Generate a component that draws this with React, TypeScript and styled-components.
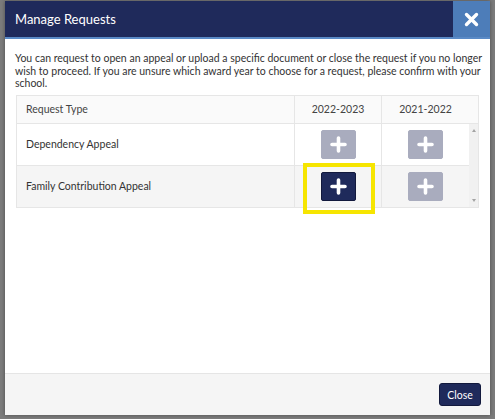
import styled, { createGlobalStyle } from 'styled-components';

const GlobalStyle = createGlobalStyle`
  html, body {
    margin: 0;
    padding: 0;
    background: #7c7c7c;
    font-family: Lato, "Open Sans", sans-serif;
  }
`;

const Backdrop = styled.div`
  width: 495px;
  height: 419px;
  padding: 1px 5px 0 5px;
  box-sizing: border-box;
  background: #7c7c7c;
`;

const Modal = styled.div`
  width: 485px;
  height: 414px;
  background: #fff;
  display: flex;
  flex-direction: column;
  box-shadow: 0 0 4px rgba(0, 0, 0, 0.4);
`;

const Header = styled.div`
  display: flex;
  align-items: stretch;
  height: 36px;
  background: #1f2a5b;
  border-bottom: 2px solid #5a8ac6;
`;

const Title = styled.h4`
  flex: 1;
  margin: 0;
  padding: 0 10px;
  display: flex;
  align-items: center;
  color: #fff;
  font-size: 13px;
  font-weight: 400;
`;

const CloseX = styled.button`
  width: 37px;
  border: none;
  padding: 0;
  background: #4d7db9;
  display: flex;
  align-items: center;
  justify-content: center;
  cursor: pointer;
`;

const Body = styled.div`
  flex: 1;
  padding: 13px 6px 0 10px;
`;

const Intro = styled.p`
  margin: 0 0 5px;
  font-size: 10.5px;
  line-height: 12.5px;
  color: #333;
`;

const TableWrap = styled.div`
  margin-left: 1px;
  width: 463px;
  border: 1px solid #e6e6e6;
  box-sizing: border-box;
`;

const HeaderRow = styled.div`
  display: grid;
  grid-template-columns: 277px 87px 1fr;
  height: 27px;
  background: #fafafa;
  border-bottom: 1px solid #e6e6e6;
`;

const HeadCell = styled.div<{ $center?: boolean }>`
  display: flex;
  align-items: center;
  justify-content: ${(p) => (p.$center ? 'center' : 'flex-start')};
  padding: ${(p) => (p.$center ? '0 9px 0 0' : '0 9px')};
  font-size: 10.5px;
  color: #444;
  border-left: ${(p) => (p.$center ? '1px solid #e6e6e6' : 'none')};
  &:nth-child(2) {
    padding: 0;
  }
`;

const BodyWrap = styled.div`
  display: flex;
`;

const Rows = styled.div`
  flex: 1;
`;

const Row = styled.div<{ $alt?: boolean }>`
  display: grid;
  grid-template-columns: 277px 87px 1fr;
  height: 41px;
  background: ${(p) => (p.$alt ? '#f5f5f5' : '#fff')};
  & + & {
    border-top: 1px solid #e6e6e6;
  }
`;

const NameCell = styled.div`
  display: flex;
  align-items: center;
  padding: 0 9px;
  font-size: 10.5px;
  color: #333;
`;

const BtnCell = styled.div`
  position: relative;
  display: flex;
  align-items: center;
  justify-content: center;
  border-left: 1px solid #e6e6e6;
`;

const AddButton = styled.button<{ $active?: boolean }>`
  width: 35px;
  height: 29px;
  padding: 0;
  border-radius: 2px;
  border: 1px solid ${(p) => (p.$active ? '#12193d' : '#a9acbe')};
  background: ${(p) => (p.$active ? '#1f2a5b' : '#a9acbe')};
  display: flex;
  align-items: center;
  justify-content: center;
  cursor: ${(p) => (p.$active ? 'pointer' : 'default')};
`;

const Highlight = styled.div`
  position: absolute;
  left: 8px;
  top: -3px;
  width: 72px;
  height: 51px;
  border: 4px solid #f6e500;
  box-sizing: border-box;
  pointer-events: none;
`;

const ScrollBar = styled.div`
  width: 9px;
  background: #f1f1f1;
  display: flex;
  flex-direction: column;
  justify-content: space-between;
  align-items: center;
  padding: 5px 0;
  box-sizing: border-box;
`;

const Arrow = styled.div<{ $down?: boolean }>`
  width: 0;
  height: 0;
  border-left: 2.5px solid transparent;
  border-right: 2.5px solid transparent;
  ${(p) => (p.$down ? 'border-top: 3px solid #a3a3a3;' : 'border-bottom: 3px solid #a3a3a3;')}
`;

const Footer = styled.div`
  height: 41px;
  border-top: 1px solid #e5e5e5;
  background: #f5f5f5;
  display: flex;
  align-items: center;
  justify-content: flex-end;
  padding: 0 9px;
`;

const CloseButton = styled.button`
  width: 42px;
  height: 23px;
  padding: 0;
  border: 1px solid #12193d;
  border-radius: 3px;
  background: #1f2a5b;
  color: #fff;
  font-family: Lato, sans-serif;
  font-size: 10.5px;
  cursor: pointer;
`;

function Plus() {
  return (
    <svg width="17" height="17" viewBox="0 0 17 17">
      <path d="M8.5 2v13M2 8.5h13" stroke="#fff" strokeWidth="3.6" strokeLinecap="round" />
    </svg>
  );
}

const requests = [
  { name: 'Dependency Appeal', active: [false, false] },
  { name: 'Family Contribution Appeal', active: [true, false] },
];

export default function App() {
  return (
    <Backdrop>
      <GlobalStyle />
      <Modal>
        <Header>
          <Title>Manage Requests</Title>
          <CloseX aria-label="Close">
            <svg width="15" height="15" viewBox="0 0 15 15">
              <path d="M2.5 2.5l10 10M12.5 2.5l-10 10" stroke="#fff" strokeWidth="3.4" strokeLinecap="round" />
            </svg>
          </CloseX>
        </Header>
        <Body>
          <Intro>
            You can request to open an appeal or upload a specific document or close the request if you no longer
            wish to proceed. If you are unsure which award year to choose for a request, please confirm with your
            school.
          </Intro>
          <TableWrap>
            <HeaderRow>
              <HeadCell>Request Type</HeadCell>
              <HeadCell $center>2022-2023</HeadCell>
              <HeadCell $center>2021-2022</HeadCell>
            </HeaderRow>
            <BodyWrap>
              <Rows>
                {requests.map((r, i) => (
                  <Row key={r.name} $alt={i % 2 === 1}>
                    <NameCell>{r.name}</NameCell>
                    {r.active.map((on, j) => (
                      <BtnCell key={j}>
                        <AddButton $active={on}>
                          <Plus />
                        </AddButton>
                        {on && <Highlight />}
                      </BtnCell>
                    ))}
                  </Row>
                ))}
              </Rows>
              <ScrollBar>
                <Arrow />
                <Arrow $down />
              </ScrollBar>
            </BodyWrap>
          </TableWrap>
        </Body>
        <Footer>
          <CloseButton>Close</CloseButton>
        </Footer>
      </Modal>
    </Backdrop>
  );
}
